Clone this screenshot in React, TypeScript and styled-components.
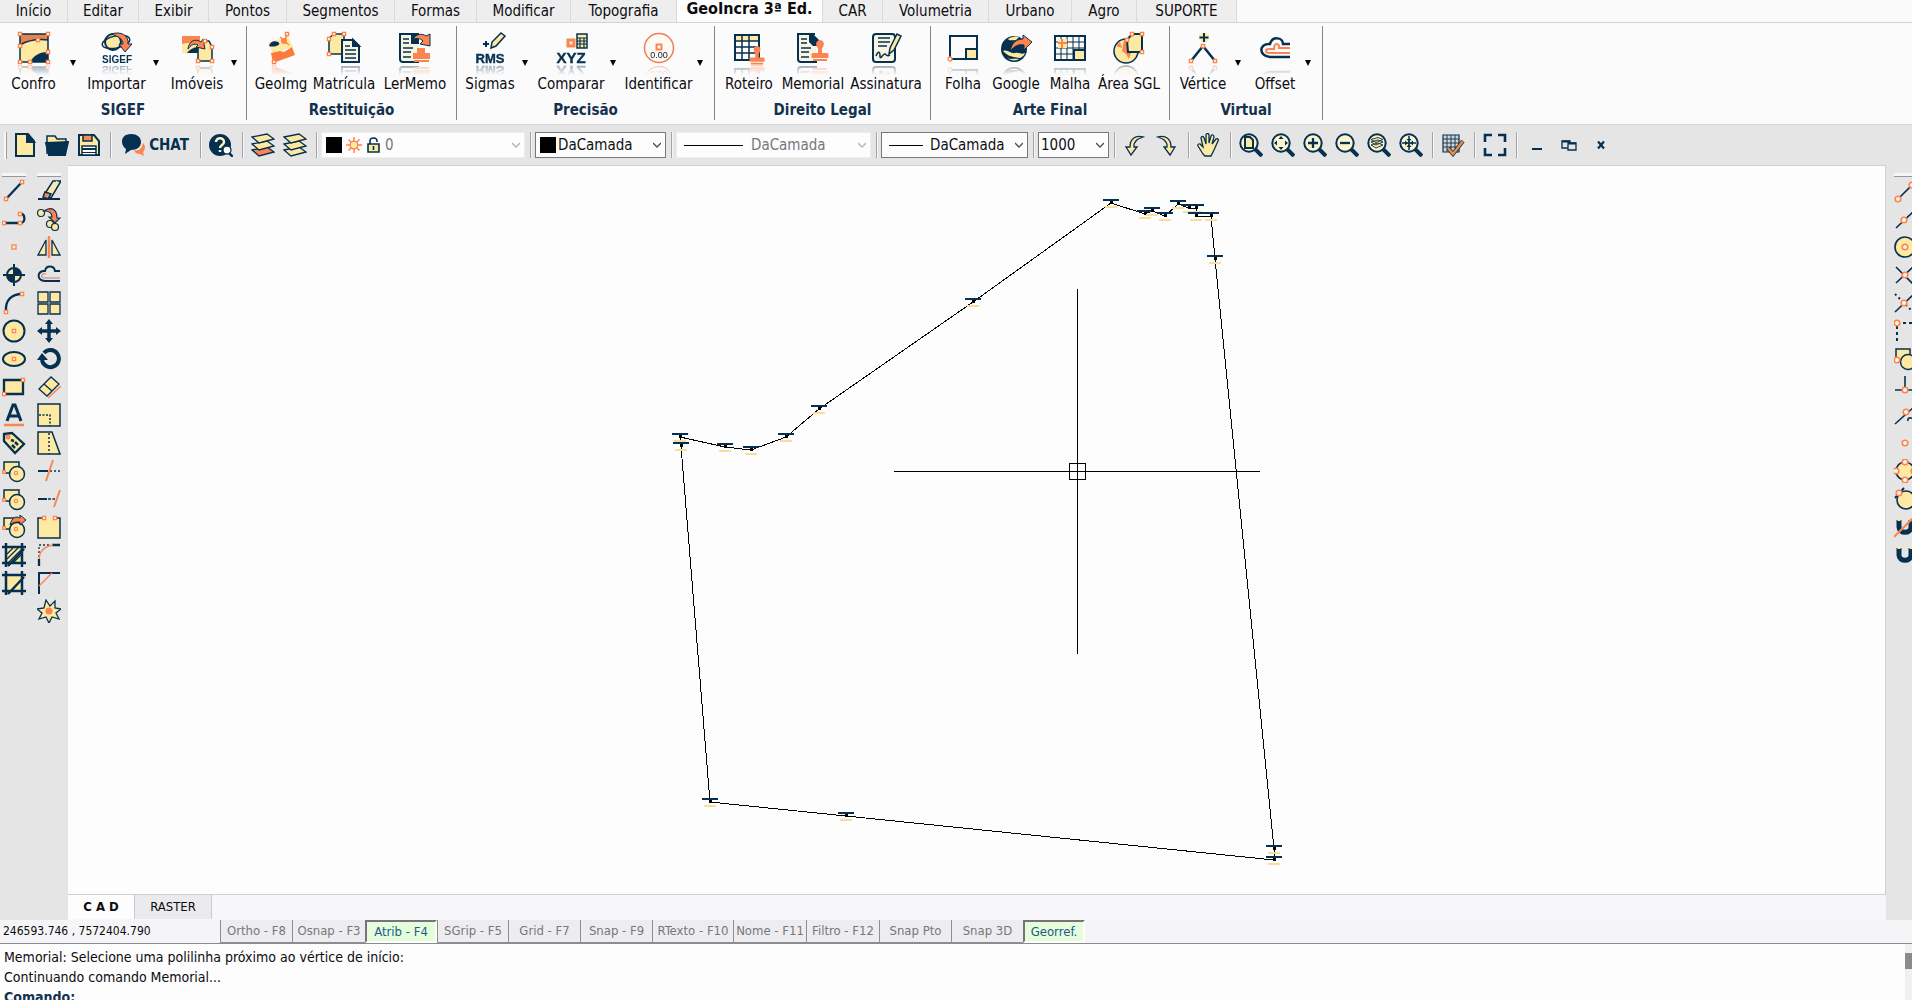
import React from "react";
import styled, { createGlobalStyle, css } from "styled-components";

const N = "#06304f";
const O = "#fb8550";
const Y = "#fde9a2";

const GlobalStyle = createGlobalStyle`
  * { box-sizing: border-box; }
  body { margin: 0; overflow: hidden; background: #fdfdfd; }
  button, select, input { font: inherit; color: inherit; }
  button { border: 0; padding: 0; background: none; cursor: default; white-space: nowrap; }
`;

const Shell = styled.div`
  display: flex;
  flex-direction: column;
  height: 100vh;
  font-family: "DejaVu Sans Condensed", "Noto Sans", sans-serif;
  font-size: 15px;
  line-height: 20px;
  color: #0c0c10;
`;

/* ---------- menu tabs ---------- */
const MenuTabs = styled.nav`
  display: flex;
  flex: 0 0 23px;
  background: #fafafb;
  border-bottom: 1px solid #d4d4d6;
`;
const MenuTab = styled.button<{ $w: number; $active?: boolean }>`
  flex: 0 0 ${(p) => p.$w}px;
  height: 22px;
  line-height: 18px;
  background: #eeeeef;
  border-right: 1px solid #dadadc;
  ${(p) =>
    p.$active &&
    css`
      background: #fdfdfd;
      font-size: 16px;
      font-weight: bold;
      padding-bottom: 4px;
    `}
`;

/* ---------- ribbon ---------- */
const Ribbon = styled.div`
  display: flex;
  flex: 0 0 101px;
  padding: 3px 0 4px;
  background: #fbfbfc;
`;
const Group = styled.section<{ $w: number }>`
  display: flex;
  flex-direction: column;
  flex: 0 0 ${(p) => p.$w}px;
  border-right: 1px solid #85858a;
`;
const GroupTools = styled.div<{ $cols: string; $pad: number }>`
  display: grid;
  grid-template-columns: ${(p) => p.$cols};
  padding-left: ${(p) => p.$pad}px;
  flex: 0 0 74px;
`;
const GroupTitle = styled.h2`
  margin: 0;
  text-align: center;
  font-size: 15px;
  line-height: 20px;
  color: #14324e;
`;
const RibbonTool = styled.button`
  display: flex;
  flex-direction: column;
  align-items: center;
  padding-top: 6px;
  min-width: 0;
  line-height: 20px;
`;
const RibbonIcon = styled.span`
  height: 42px;
  svg {
    display: block;
    overflow: visible;
    -webkit-box-reflect: below 1px linear-gradient(transparent 68%, rgba(0, 0, 0, 0.4));
  }
`;
const CaretButton = styled.button`
  display: flex;
  align-items: flex-start;
  padding: 34px 0 0 3px;
`;
const CaretShape = styled.span`
  border: 3px solid transparent;
  border-top: 6px solid #050508;
  border-bottom: 0;
`;

/* ---------- tool bar ---------- */
const ToolBar = styled.div`
  display: flex;
  align-items: center;
  flex: 0 0 41px;
  background: #e5e5e6;
  border-top: 1px solid #d2d2d4;
`;
const Grip = styled.span`
  flex: 0 0 3px;
  height: 27px;
  margin: 0 2px 0 4px;
  border: solid #9c9ca0;
  border-width: 0 1px 0 0;
  background: #f8f8fa;
`;
const Tool = styled.button<{ $w?: number }>`
  display: flex;
  align-items: center;
  justify-content: center;
  gap: 4px;
  flex: 0 0 ${(p) => p.$w ?? 32}px;
  height: 32px;
  font-weight: bold;
  color: ${N};
`;
const Sep = styled.span`
  flex: 0 0 10px;
  height: 26px;
  display: flex;
  justify-content: center;
  &::before { content: ""; width: 1px; background: #a4a4a8; box-shadow: 1px 0 #f6f6f8; }
`;
const Combo = styled.label<{ $w: number; $pad: number; $off?: boolean }>`
  display: grid;
  align-items: center;
  flex: 0 0 ${(p) => p.$w}px;
  height: 26px;
  background: #fdfdfd;
  border: 1px solid ${(p) => (p.$off ? "#ededee" : "#77777c")};
  color: ${(p) => (p.$off ? "#77777c" : "#101014")};
  & > * { grid-area: 1 / 1; }
  select {
    appearance: none;
    width: 100%;
    height: 24px;
    border: 0;
    background: none;
    opacity: 1;
    padding: 0 0 0 ${(p) => p.$pad}px;
  }
`;
const ComboArt = styled.span`
  display: flex;
  align-items: center;
  gap: 4px;
  padding-left: 4px;
`;
const Chevron = styled.svg`
  justify-self: end;
  margin-right: 4px;
  pointer-events: none;
`;
const Swatch = styled.span`
  width: 16px;
  height: 16px;
  background: #000;
`;
const Stroke = styled.span<{ $w: number }>`
  width: ${(p) => p.$w}px;
  height: 1px;
  margin-left: 3px;
  background: #000;
`;

/* ---------- work area ---------- */
const Work = styled.div`
  display: flex;
  flex: 1 1 auto;
  min-height: 0;
`;
const Palette = styled.aside<{ $w: number; $side: "left" | "right" }>`
  display: flex;
  flex: 0 0 ${(p) => p.$w}px;
  background: #e5e5e6;
  overflow: hidden;
  padding-left: ${(p) => (p.$side === "right" ? 8 : 2)}px;
  gap: 11px;
`;
const PaletteColumn = styled.div`
  display: flex;
  flex-direction: column;
  flex: 0 0 24px;
  padding-top: 8px;
  &::before { content: ""; height: 3px; border-bottom: 1px solid #98989c; background: #f6f6f8; }
`;
const PaletteTool = styled.button`
  height: 28px;
  svg { display: block; }
`;
const Centre = styled.main`
  display: flex;
  flex-direction: column;
  flex: 1 1 auto;
  min-width: 0;
`;
const Canvas = styled.div`
  flex: 1 1 0;
  min-height: 0;
  background: #fdfdfd;
  border: 1px solid #d0d0d4;
  border-width: 1px 1px 1px 0;
  svg { display: block; width: 100%; height: 100%; }
`;
const SheetTabs = styled.div`
  display: flex;
  flex: 0 0 25px;
  background: #f7f7f9;
  padding-bottom: 1px;
`;
const SheetTab = styled.button<{ $w: number; $active?: boolean }>`
  flex: 0 0 ${(p) => p.$w}px;
  font-size: 13px;
  background: ${(p) => (p.$active ? "#fdfdfd" : "#ebebed")};
  font-weight: ${(p) => (p.$active ? "bold" : "normal")};
  border-right: 1px solid #c9c9cf;
`;

/* ---------- status ---------- */
const StatusBar = styled.footer`
  display: flex;
  flex: 0 0 24px;
  background: #f5f5f7;
  border-bottom: 1px solid #8a8a90;
  font-size: 13px;
  line-height: 18px;
`;
const Coordinates = styled.output`
  flex: 0 0 220px;
  padding: 2px 0 0 3px;
  font-size: 12px;
`;
const Toggle = styled.button<{ $w: number; $on?: boolean }>`
  flex: 0 0 ${(p) => p.$w}px;
  border-left: 1px solid #8e8e93;
  border-bottom: 1px solid #8e8e93;
  background: #ededf0;
  color: #77777c;
  ${(p) =>
    p.$on &&
    css`
      background: #e6fddc;
      color: #1a5c8c;
      border: 2px solid #74747a;
      border-right-color: #fdfdfd;
      border-bottom-color: #fdfdfd;
    `}
`;

const CommandArea = styled.section`
  display: flex;
  flex: 0 0 56px;
  overflow: hidden;
  background: #fdfdfd;
`;
const CommandLog = styled.div`
  flex: 1 1 auto;
  padding: 3px 0 0 4px;
  font-size: 14px;
  p { margin: 0; }
`;
const CommandLine = styled.label`
  display: flex;
  font-weight: bold;
  color: #14324e;
  input { flex: 1; height: 20px; border: 0; padding: 0 4px; background: none; outline: 0; }
`;
const ScrollTrack = styled.div`
  flex: 0 0 7px;
  padding-top: 9px;
  background: #f0f0f3;
  &::before { content: ""; display: block; height: 16px; background: #8a8a8f; }
`;

/* ---------- icon helpers ---------- */
const Ico = ({ s = 24, children }: { s?: number; children: React.ReactNode }) => (
  <svg width={s} height={s} viewBox={`0 0 ${s} ${s}`} fill="none" stroke={N} strokeWidth={2} aria-hidden="true">
    {children}
  </svg>
);
const Node = ({ x, y, r = 1.6 }: { x: number; y: number; r?: number }) => (
  <rect x={x - r} y={y - r} width={r * 2} height={r * 2} fill="#fff3dc" stroke={O} strokeWidth={1.3} />
);
const Ring = ({ x, y }: { x: number; y: number }) => (
  <circle cx={x} cy={y} r={2.8} fill="#fff6ea" stroke={O} strokeWidth={1.6} />
);
const Stamp = ({ x, y }: { x: number; y: number }) => (
  <path
    transform={`translate(${x} ${y})`}
    fill={O}
    stroke="none"
    d="M8 0a4 4 0 0 1 3.600 5.500L10 9v4h5a1.500 1.500 0 0 1 1.500 1.500V18h-17v-3.500A1.500 1.500 0 0 1 1 13h5V9L4.400 5.500A4 4 0 0 1 8 0zM1 19h14v2H1z"
  />
);
const Page = ({ x = 0, y = 0 }: { x?: number; y?: number }) => (
  <g transform={`translate(${x} ${y})`}>
    <path fill="#f7f4e2" d="M1 1h11l6 6v16H1z" />
    <path fill={N} d="M12 1v6h6z" />
    <path strokeWidth={1.500} d="M4 7h5M4 11h11M4 15h11M4 19h11" />
  </g>
);

const ribbonIcons: Record<string, React.ReactNode> = {
  Confro: (
    <>
      <path fill={Y} stroke="none" d="M2 2h28v28H2z" />
      <path fill="#e8824f" stroke="none" d="M2 2h28v6Q14 6 2 13z" />
      <path fill={N} stroke="none" d="M12 30c4-7 10-10 18-10v10z" />
      <path d="M2 30V2h28v28z M2 13Q14 6 30 8" strokeWidth={1.500} />
      <Node x={2} y={2} /><Node x={30} y={2} /><Node x={2} y={14} /><Node x={30} y={20} /><Node x={2} y={30} /><Node x={12} y={30} /><Node x={30} y={30} /><Node x={20} y={8} />
    </>
  ),
  Importar: (
    <>
      <circle cx={12} cy={10} r={8} fill={Y} />
      <ellipse cx={15} cy={10} rx={14} ry={6} strokeWidth={1.500} transform="rotate(-12 15 10)" />
      <path fill={O} strokeWidth={1} d="M10 2c10-3 18 1 17 10h4l-7 8-6-8h4c0-5-5-8-12-10z" />
      <text x={16} y={31} textAnchor="middle" fill={N} stroke="none" fontSize={10} fontWeight="bold" fontFamily="Liberation Sans">SIGEF</text>
    </>
  ),
  "Imóveis": (
    <>
      <path fill={O} stroke="none" d="M1 4h18v6L1 12z" />
      <path fill={Y} stroke="none" d="M1 12l18-3v12H1z" />
      <path fill={N} stroke="none" d="M6 21c4-5 8-6 13-6v6z" />
      <path fill={Y} strokeWidth={1.500} d="M17 15l6-6h5l3 6v14H17z" />
      <path fill={O} strokeWidth={1} d="M7 17C8 9 14 6 20 10l2-3 2 10-9-2 2-2c-4-2-7 0-10 4z" />
      <Node x={24} y={9} /><Node x={31} y={15} /><Node x={31} y={29} /><Node x={17} y={29} />
    </>
  ),
  GeoImg: (
    <>
      <path fill={Y} stroke="none" d="M3 11l20-7 5 11-20 6z" />
      <path fill={N} stroke="none" d="M4 14c1-4 5-6 9-4s-2 6-9 4z" />
      <path fill="#fb7a3c" stroke="none" d="M6 21l9-2 4 1 8-5 3 8-22 8z" />
      <path stroke={O} strokeWidth={1.500} d="M20 9l2-7M15 5l9 8M9 26v4" />
      <circle cx={19} cy={9} r={3} fill={O} stroke="none" />
      <Node x={22} y={2} /><Node x={9} y={30} />
    </>
  ),
  "Matrícula": (
    <>
      <path fill={Y} d="M1 22V6l5-4h10v20z" strokeWidth={1.500} />
      <Node x={6} y={2} /><Node x={16} y={2} /><Node x={1} y={7} /><Node x={1} y={22} />
      <Page x={13} y={7} />
    </>
  ),
  LerMemo: (
    <>
      <path fill="#f7f4e2" d="M20 30H4a3 3 0 0 1-3-3V2h19" />
      <path fill={N} stroke="none" d="M12 2h8v10h-8z" />
      <path strokeWidth={1.500} d="M4 7h6M4 11h6M4 16h10M4 20h8M4 25h8" />
      <path fill={O} stroke="none" d="M18 16h8v5h5v6H14v-6h4zM15 28h15v2H15z" />
      <path fill={O} strokeWidth={1} d="M14 7C17 2 23 1 27 4l4-2v12l-10-2 3-3c-3-3-6-3-10-2z" />
    </>
  ),
  Sigmas: (
    <>
      <path fill={Y} strokeWidth={1.500} d="M17 16l1-6 9-9 4 3-9 10z" />
      <path d="M12 9v6M9 12h6" strokeWidth={2} />
      <text x={16} y={31} textAnchor="middle" fill={N} stroke={N} strokeWidth={0.400} fontSize={13} fontWeight="bold" fontFamily="Liberation Sans">RMS</text>
    </>
  ),
  Comparar: (
    <>
      <rect x={13} y={8} width={6} height={6} fill="#fff3dc" stroke={O} strokeWidth={3} />
      <rect x={22} y={2} width={10} height={14} fill={Y} strokeWidth={1.500} />
      <path strokeWidth={1.200} d="M22 6h10M22 9h10M22 12h10M25 6v10M29 6v10" />
      <text x={16} y={31} textAnchor="middle" fill={N} stroke={N} strokeWidth={0.400} fontSize={15} fontWeight="bold" fontFamily="Liberation Sans">XYZ</text>
    </>
  ),
  Identificar: (
    <>
      <circle cx={16} cy={16} r={14.500} stroke="#ee8058" strokeWidth={1.500} fill="#fdfaf4" />
      <rect x={13.500} y={12.500} width={5} height={5} stroke={O} fill="#fff" />
      <text x={16} y={26} textAnchor="middle" fill="#0c1c2c" stroke="none" fontSize={9} fontFamily="Liberation Sans">0.00</text>
    </>
  ),
  Roteiro: (
    <>
      <path fill={Y} stroke="none" d="M2 3h24v6H2z" />
      <path strokeWidth={2} d="M2 3h24v25H2z" />
      <path strokeWidth={1.500} d="M2 9h24M2 15h24M2 21h24M9 3v25M16 3v25" />
      <g transform="translate(17 14) scale(0.880)"><Stamp x={0} y={0} /></g>
    </>
  ),
  Memorial: (
    <>
      <path fill="#f7f4e2" d="M20 30H4a3 3 0 0 1-3-3V2h17" />
      <path fill={N} stroke="none" d="M12 2h4l6 6v6h-6l-4-4z" />
      <path strokeWidth={1.500} d="M4 7h6M4 11h6M4 16h10M4 20h8M4 25h8" />
      <Stamp x={15} y={8} />
    </>
  ),
  Assinatura: (
    <>
      <rect x={3} y={2} width={22} height={28} rx={3} fill="#f7f4e2" />
      <path strokeWidth={1.500} d="M8 6h12M8 10h12M8 14h9M6 24c2-5 4-5 4 0s3-3 5-2 2 3 5 1" />
      <path fill={Y} strokeWidth={1.500} d="M19 22l1-6 7-14 4 2-7 14z" />
    </>
  ),
  Folha: (
    <>
      <path strokeWidth={2} d="M3 27V4h27v23z" />
      <rect x={19} y={17} width={11} height={10} fill={Y} />
      <circle cx={3} cy={27} r={2} fill="#fff" stroke={O} strokeWidth={1.300} />
    </>
  ),
  Google: (
    <>
      <circle cx={14} cy={17} r={13} fill={N} stroke="none" />
      <path fill={Y} stroke="none" d="M8 7c3-2 7-3 11-2l-3 3c-4 0-7 1-8-1zM3 19c5-2 7 3 12 2s6 2 10 0c-1 3-3 4-5 5-5-1-12-1-17-7zM7 26c4 2 8 0 12 1-3 2-8 2-12-1z" />
      <path fill={O} strokeWidth={1} d="M10 19c2-9 7-12 13-12V3l9 7-8 8v-5c-6-1-9 1-14 6z" />
    </>
  ),
  Malha: (
    <>
      <path strokeWidth={2} fill="#fafaf6" d="M1 4h30v24H1z" />
      <path strokeWidth={1} d="M1 10h30M1 16h30M1 22h30M7 4v24M13 4v24M19 4v24M25 4v24" />
      <path fill={Y} stroke="none" d="M4 7h9v9H4z" />
      <path stroke={O} d="M8 7v9M4 11h9" />
      <rect x={20} y={18} width={11} height={10} fill={Y} />
    </>
  ),
  "Área SGL": (
    <>
      <circle cx={13} cy={19} r={12} fill={Y} strokeWidth={1.500} />
      <path fill={O} stroke="none" d="M11 8l6 1 2 9-3 9-3-5-4-3zM3 14l4-4 2 6z" />
      <path fill={Y} strokeWidth={2} d="M14 8l5-6h10v18H15z" />
      <Node x={19} y={2} /><Node x={29} y={2} /><Node x={14} y={8} /><Node x={29} y={20} />
    </>
  ),
  "Vértice": (
    <>
      <path strokeWidth={2.500} d="M4 29l12-15 12 15" />
      <path stroke={Y} strokeWidth={6} d="M17 1v9M12 5.500h10" />
      <path d="M17 1v9M12.500 5.500h9" strokeWidth={2} />
      <Node x={16} y={14} /><Node x={4} y={29} /><Node x={28} y={29} />
    </>
  ),
  Offset: (
    <>
      <path strokeWidth={2.500} d="M31 12h-7c0-7-11-8-13 0-11-1-12 12 0 13h20" />
      <path stroke={O} strokeWidth={2} d="M31 16H20c1-5-5-6-5 1h-5c-4 0-4 4 0 4h21" />
    </>
  ),
};

type Item = { label: string; caret?: boolean };
const groups: { title: string; w: number; pad: number; cols: string; items: Item[] }[] = [
  { title: "SIGEF", w: 247, pad: 0, cols: "67px 16px 67px 16px 62px 16px", items: [{ label: "Confro", caret: true }, { label: "Importar", caret: true }, { label: "Imóveis", caret: true }] },
  { title: "Restituição", w: 210, pad: 4, cols: "60px 66px 76px", items: [{ label: "GeoImg" }, { label: "Matrícula" }, { label: "LerMemo" }] },
  { title: "Precisão", w: 258, pad: 4, cols: "58px 16px 72px 16px 71px 16px", items: [{ label: "Sigmas", caret: true }, { label: "Comparar", caret: true }, { label: "Identificar", caret: true }] },
  { title: "Direito Legal", w: 216, pad: 4, cols: "60px 68px 78px", items: [{ label: "Roteiro" }, { label: "Memorial" }, { label: "Assinatura" }] },
  { title: "Arte Final", w: 239, pad: 4, cols: "56px 50px 58px 60px", items: [{ label: "Folha" }, { label: "Google" }, { label: "Malha" }, { label: "Área SGL" }] },
  { title: "Virtual", w: 153, pad: 4, cols: "58px 16px 54px 16px", items: [{ label: "Vértice", caret: true }, { label: "Offset", caret: true }] },
];

const menu: [string, number][] = [
  ["Início", 68], ["Editar", 71], ["Exibir", 70], ["Pontos", 78], ["Segmentos", 108], ["Formas", 82], ["Modificar", 94],
  ["Topografia", 106], ["GeoIncra 3ª Ed.", 146], ["CAR", 60], ["Volumetria", 106], ["Urbano", 83], ["Agro", 65], ["SUPORTE", 100],
];

/* ---------- palette icons ---------- */
const rectCircle = (
  <>
    <path fill={Y} strokeWidth={1.500} d="M2 3h15v11H2z" />
    <circle cx={15} cy={15} r={7.500} fill={Y} strokeWidth={1.500} />
    <circle cx={14} cy={14} r={1.600} stroke={O} fill="#fff3dc" strokeWidth={1.200} />
    <Node x={2} y={13} r={1.300} />
  </>
);
const hatchFrame = (
  <>
    <path fill={Y} stroke="none" d="M4 4h16v16H4z" />
    <path strokeWidth={2.500} d="M4 0v24M20 0v24M0 4h24M0 20h24M22 6L6 23" />
  </>
);

const drawTools: [string, React.ReactNode][] = [
  ["Linha", <><path strokeWidth={2.300} d="M4 20L20 3" /><Node x={4} y={20} /><Node x={20} y={3} /></>],
  ["Polilinha", <><path strokeWidth={2.300} d="M2 16h17c5-1 4-9 0-9" /><Node x={2} y={16} /><Node x={18} y={16} /><Node x={18} y={7} /></>],
  ["Ponto", <Node x={12} y={12} r={2} />],
  ["Alvo", <><circle cx={12} cy={12} r={7} fill={Y} /><path fill={N} stroke="none" d="M12 5a7 7 0 0 1 7 7h-7v7a7 7 0 0 1-7-7h7z" /><path d="M12 1v22M1 12h22" /></>],
  ["Arco", <><path strokeWidth={2.300} d="M4 20C3 9 10 3 20 3" /><Node x={4} y={21} /><Node x={20} y={3} /></>],
  ["Círculo", <><circle cx={12} cy={12} r={10.500} fill={Y} /><Node x={12} y={12} /></>],
  ["Elipse", <><ellipse cx={12} cy={12} rx={11} ry={7} fill={Y} /><Node x={12} y={12} /></>],
  ["Retângulo", <><path fill={Y} strokeWidth={2.300} d="M2 5h19v14H2z" /><Node x={21} y={5} /><Node x={2} y={19} /></>],
  ["Texto", <><path strokeWidth={3} d="M5 18L11 2h2l6 16M8 13h8" /><path stroke={O} strokeWidth={2.500} d="M2 22h20" /></>],
  ["Etiqueta", <><path fill={Y} strokeWidth={2.300} d="M2 3l8-1 12 11-9 9L2 10z" /><path d="M9 9l3 1M13 11l3 3M10 14l3 3" strokeWidth={2.500} /><circle cx={6} cy={6} r={1.500} stroke={O} /></>],
  ["Região", rectCircle],
  ["Bloco", rectCircle],
  ["Inserir", <>{rectCircle}<path fill={O} strokeWidth={1} d="M8 10C10 2 14 1 18 3V0l6 5-6 5V7c-4 0-7 0-10 3z" /></>],
  ["Hachura", <>{hatchFrame}<path strokeWidth={1.300} d="M5 11l6-6M5 16L16 5M6 20L20 6M11 20l9-9" /></>],
  ["Recorte", hatchFrame],
];
const editTools: [string, React.ReactNode][] = [
  ["Apagar", <><path fill={Y} strokeWidth={1.500} d="M7 16L16 2h8L14 19z" /><path stroke="#e5e5e6" strokeWidth={1.300} d="M12 14l8-12" /><path fill="#f08c58" strokeWidth={1.500} d="M8 13l6 2-3 5-5-2z" /><path d="M1 20h22" /></>],
  ["Copiar", <><circle cx={4} cy={6} r={3.500} fill={Y} strokeWidth={1.200} /><circle cx={13} cy={17} r={3.500} fill={Y} strokeWidth={1.200} /><circle cx={18} cy={20} r={3.500} fill={Y} strokeWidth={1.200} /><path fill={O} strokeWidth={1.200} d="M7 4c7-5 13-2 13 7h3l-5 5-6-6h3c0-4-3-6-8-6z" /></>],
  ["Espelhar", <><path fill={Y} strokeWidth={1.300} d="M9 5v15H1zM15 5v15h8z" /><path stroke={O} strokeWidth={2.500} d="M12 1v22" /></>],
  ["Offset", <><path d="M23 8h-5c-1-6-9-6-10 0C0 7-1 18 8 18h15" /><path stroke="#dc9a98" d="M23 15H8c-5 0-4-5 1-4" strokeWidth={1.500} /></>],
  ["Matriz", <path fill={Y} strokeWidth={1.300} d="M1 1h10v10H1zM13 1h10v10H13zM1 13h10v10H1zM13 13h10v10H13z" />],
  ["Mover", <><path strokeWidth={3.500} d="M12 4v16M4 12h16" /><path fill={N} stroke="none" d="M12 0l4 5H8zM12 24l4-5H8zM0 12l5-4v8zM24 12l-5-4v8z" /></>],
  ["Girar", <><path strokeWidth={4} d="M7 6a8.500 8.500 0 1 1-2 7" /><path fill={N} stroke="none" d="M0 13l5-7 6 7z" /></>],
  ["Alinhar", <><path fill={Y} strokeWidth={1.300} d="M2 14L14 2l8 7L10 21zM7 9l8 7" /><path stroke={O} strokeWidth={1.500} d="M11 23L24 11" /></>],
  ["Escala", <><path fill={Y} strokeWidth={1.500} d="M1 1h22v22H1z" /><path strokeWidth={1.500} strokeDasharray="2 1.500" d="M2 12h11v11" /></>],
  ["Esticar", <><path fill={Y} strokeWidth={1.500} d="M1 1h14l8 22H1z" /><path strokeWidth={1.500} strokeDasharray="2 2" d="M12 2v21" /></>],
  ["Aparar", <><path d="M1 12h10" /><path d="M13 12h10" strokeDasharray="2 2" strokeWidth={1.300} /><path stroke={O} d="M9 22l7-21" /></>],
  ["Estender", <><path d="M1 12h9" /><path d="M11 12h7" strokeDasharray="3 1.500" strokeWidth={1.500} /><path stroke={O} d="M17 20l6-17" /></>],
  ["Quebrar", <><path fill={Y} strokeWidth={1.500} d="M7 3H1v20h22V3h-6" /><Node x={7} y={3} /><Node x={18} y={3} /></>],
  ["Filete", <><path d="M2 23v-7M15 2h8" strokeWidth={2.300} /><path strokeDasharray="2 2" strokeWidth={1.300} d="M2 14V2h12" /><path stroke={O} strokeWidth={1.500} d="M2 16Q3 4 16 2" /></>],
  ["Chanfro", <><path strokeWidth={2} d="M2 23V2h21" /><path stroke={O} strokeWidth={1.500} d="M2 15L15 2" /></>],
  ["Explodir", <><path fill={Y} strokeWidth={1.300} d="M9 1l4 6 5-5v7l6 1-5 4 3 6-7-2-3 6-3-6-7 2 3-6-5-4 7-1z" /><circle cx={12} cy={12} r={3.500} fill={O} stroke="none" /></>],
];
const snapTools: [string, React.ReactNode][] = [
  ["Extremidade", <><path strokeWidth={1.600} d="M4 20L18 6" /><Ring x={4} y={20} /><Ring x={18} y={6} /></>],
  ["Ponto médio", <><path strokeWidth={1.600} d="M2 21L20 4" /><Ring x={10} y={13} /></>],
  ["Centro", <><circle cx={11} cy={12} r={10} fill={Y} strokeWidth={1.600} /><Ring x={11} y={12} /></>],
  ["Interseção", <><path strokeWidth={1.600} d="M2 4l17 17M2 20L19 4" /><Ring x={11} y={12} /></>],
  ["Interseção aparente", <><path strokeWidth={1.600} d="M1 21L19 4" /><path strokeDasharray="2 3" d="M1 3l17 17" /><Ring x={10} y={12} /></>],
  ["Extensão", <><path strokeDasharray="3 3" d="M3 22V4h17" /><Ring x={3} y={4} /></>],
  ["Inserção", <><path fill={Y} strokeWidth={1.500} d="M2 2h14v11H2z" /><circle cx={14} cy={15} r={7.500} fill={Y} strokeWidth={1.500} /><Ring x={3} y={13} /></>],
  ["Perpendicular", <><path strokeWidth={1.600} d="M11 1v14M1 15h20" /><Ring x={11} y={15} /></>],
  ["Próximo", <><path strokeWidth={1.600} d="M1 21L20 4M14 18q-1-5 6-2" /><Ring x={12} y={9} /></>],
  ["Nó", <Ring x={11} y={12} />],
  ["Quadrante", <><circle cx={11} cy={12} r={9} fill={Y} strokeWidth={1.600} /><Ring x={11} y={3} /><Ring x={2} y={12} /><Ring x={20} y={12} /><Ring x={11} y={21} /></>],
  ["Tangente", <><circle cx={12} cy={13} r={9} fill={Y} strokeWidth={1.600} /><path d="M1 11L10 1" /><Ring x={5} y={6} /></>],
  ["Desligar ímã", <><path strokeWidth={5} d="M5 5v7c0 7 12 7 12 0V5" /><path stroke={Y} strokeWidth={3} d="M5 3v3M17 3v3" /><path stroke={O} strokeWidth={2} d="M0 22L20 2" /></>],
  ["Ímã", <><path strokeWidth={5} d="M5 5v7c0 7 12 7 12 0V5" /><path stroke={Y} strokeWidth={3} d="M5 3v3M17 3v3" /></>],
];

const Column = ({ tools }: { tools: [string, React.ReactNode][] }) => (
  <PaletteColumn>
    {tools.map(([name, art]) => (
      <PaletteTool key={name} aria-label={name}>
        <Ico>{art}</Ico>
      </PaletteTool>
    ))}
  </PaletteColumn>
);

/* ---------- tool bar icons ---------- */
const Zoom = ({ children, name }: { children: React.ReactNode; name: string }) => (
  <Tool aria-label={name}>
    <Ico>
      <path strokeWidth={4} d="M16 16l7 7" />
      <circle cx={10} cy={10} r={8.700} fill="#fbf4cf" strokeWidth={2} />
      {children}
    </Ico>
  </Tool>
);
const Layers = ({ name, accent }: { name: string; accent?: boolean }) => (
  <Tool aria-label={name}>
    <Ico>
      <g strokeWidth={1.300}>
        <path fill={accent ? O : Y} d="M1 17l15-3 7 5-15 4z" />
        <path fill={Y} d="M1 11l15-3 7 5-15 4z" />
        <path fill={Y} d="M1 4l15-3 7 5-15 4z" />
      </g>
    </Ico>
  </Tool>
);
const Chev = ({ off }: { off?: boolean }) => (
  <Chevron width={8} height={6} viewBox="0 0 8 6" fill="none" stroke={off ? "#b4b4b9" : "#505056"} strokeWidth={1.300}>
    <path d="M0 1l4 4 4-4" />
  </Chevron>
);

/* ---------- drawing ---------- */
const vertices: [number, number][] = [
  [680, 437], [725, 447], [751, 450], [786, 437], [819, 409], [973, 302], [1111, 203], [1145, 214], [1152, 211], [1165, 216],
  [1178, 204], [1189, 208], [1196, 208], [1196, 216], [1211, 216], [1215, 259], [1274, 849], [1274, 860], [846, 816], [710, 802], [681, 446],
];

const Drawing = () => (
  <svg viewBox="68 166 1817 728" role="img" aria-label="Poligonal">
    <polygon points={vertices.map((v) => v.join(",")).join(" ")} fill="none" stroke="#000" strokeWidth={1} shapeRendering="crispEdges" />
    {vertices.map(([x, y]) => (
      <g key={`${x}-${y}`} shapeRendering="crispEdges">
        <rect x={x - 6} y={y + 3} width={12} height={2} fill="#f9dd9c" />
        <rect x={x - 8} y={y - 4} width={16} height={2} fill={N} />
        <rect x={x - 1} y={y - 2} width={3} height={3} fill="#000" />
      </g>
    ))}
    <g fill="none" stroke="#000" shapeRendering="crispEdges">
      <path d="M894 471.500h366M1077.500 289v365" />
      <rect x={1069.500} y={463.500} width={16} height={16} />
    </g>
  </svg>
);

const toggles: [string, number, boolean?][] = [
  ["Ortho - F8", 72], ["Osnap - F3", 73], ["Atrib - F4", 72, true], ["SGrip - F5", 71], ["Grid - F7", 72], ["Snap - F9", 72], ["RTexto - F10", 81],
  ["Nome - F11", 73], ["Filtro - F12", 73], ["Snap Pto", 72], ["Snap 3D", 72], ["Georref.", 62, true],
];

export default function App() {
  return (
    <Shell>
      <GlobalStyle />
      <MenuTabs>
        {menu.map(([label, w]) => (
          <MenuTab key={label} $w={w} $active={label.startsWith("Geo")}>{label}</MenuTab>
        ))}
      </MenuTabs>

      <Ribbon>
        {groups.map((g) => (
          <Group key={g.title} $w={g.w}>
            <GroupTools $cols={g.cols} $pad={g.pad}>
              {g.items.map((it) => (
                <React.Fragment key={it.label}>
                  <RibbonTool>
                    <RibbonIcon><Ico s={32}>{ribbonIcons[it.label]}</Ico></RibbonIcon>
                    {it.label}
                  </RibbonTool>
                  {it.caret && <CaretButton aria-label={`Mais opções de ${it.label}`}><CaretShape /></CaretButton>}
                </React.Fragment>
              ))}
            </GroupTools>
            <GroupTitle>{g.title}</GroupTitle>
          </Group>
        ))}
      </Ribbon>

      <ToolBar>
        <Grip />
        <Tool aria-label="Novo"><Ico><path fill={Y} d="M3 1h12l6 7v15H3z" /><path fill={N} d="M14 1v8h7z" /></Ico></Tool>
        <Tool aria-label="Abrir"><Ico><path fill={Y} strokeWidth={1.500} d="M2 21V3h8l2 3h9v5" /><path fill={N} d="M1 10l22-1-3 13H4z" /></Ico></Tool>
        <Tool aria-label="Salvar"><Ico><path fill={Y} d="M2 2h15l5 6v14H2z" /><path fill="#f08c58" strokeWidth={1.500} d="M6 2h9v6H6z" /><path fill="#fff" strokeWidth={1.500} d="M5 13h14v9H5z" /><path fill={N} stroke="none" d="M5 15h14v2H5zM5 19h14v1H5z" /></Ico></Tool>
        <Sep />
        <Tool $w={80}>
          <Ico>
            <path fill={O} stroke="none" d="M13 17c5 2 8-2 9-7 3 3 2 7 0 9l1 4-4-2c-3 0-5-1-6-4z" />
            <path fill={N} stroke="none" d="M10 1c6 0 10 3 10 8s-4 8-10 8l-6 4 1-5c-6-4-6-15 5-15z" />
          </Ico>
          CHAT
        </Tool>
        <Sep />
        <Tool aria-label="Ajuda">
          <Ico>
            <circle cx={11} cy={12} r={11} fill={N} stroke="none" />
            <path stroke="#fdf3c8" strokeWidth={2.500} d="M7 9c0-5 8-5 8 0 0 3-4 3-4 6M11 17v2" />
            <circle cx={18} cy={17} r={4} fill="#fff" strokeWidth={1.300} /><path strokeWidth={2.500} d="M20 20l4 4" />
          </Ico>
        </Tool>
        <Sep />
        <Layers name="Camadas" accent />
        <Layers name="Gerenciar camadas" />
        <Sep />
        <Combo $w={204} $pad={63} $off>
          <ComboArt>
            <Swatch />
            <Ico s={16}><path stroke={O} strokeWidth={1.500} d="M8 0v16M0 8h16M2.500 2.500l11 11M13.500 2.500l-11 11" /><circle cx={8} cy={8} r={3.800} fill={Y} stroke={O} strokeWidth={1.300} /></Ico>
            <Ico s={16}><path strokeWidth={1.600} d="M4 7V4c0-4 7-4 7 0v1" /><path fill={Y} strokeWidth={1.600} d="M2 7h11v8H2zM7.500 9v4" /></Ico>
          </ComboArt>
          <select disabled aria-label="Camada"><option>0</option></select>
          <Chev off />
        </Combo>
        <Sep />
        <Combo $w={131} $pad={22}>
          <ComboArt><Swatch /></ComboArt>
          <select aria-label="Cor"><option>DaCamada</option></select>
          <Chev />
        </Combo>
        <Sep />
        <Combo $w={195} $pad={74} $off>
          <ComboArt><Stroke $w={59} /></ComboArt>
          <select disabled aria-label="Tipo de linha"><option>DaCamada</option></select>
          <Chev off />
        </Combo>
        <Sep />
        <Combo $w={147} $pad={48}>
          <ComboArt><Stroke $w={34} /></ComboArt>
          <select aria-label="Espessura"><option>DaCamada</option></select>
          <Chev />
        </Combo>
        <Sep />
        <Combo $w={71} $pad={2}>
          <select aria-label="Escala"><option>1000</option></select>
          <Chev />
        </Combo>
        <Sep />
        <Tool aria-label="Desfazer"><Ico><path fill={Y} strokeWidth={1.300} d="M20 4C12 2 7 6 7 14H3l5 8 6-8h-3c-1-5 3-8 9-10z" /></Ico></Tool>
        <Tool aria-label="Refazer"><Ico><path fill={Y} strokeWidth={1.300} d="M3 4c8-2 13 2 13 10h4l-5 8-6-8h3c1-5-3-8-9-10z" /></Ico></Tool>
        <Sep />
        <Tool aria-label="Mover vista"><Ico><path fill={Y} strokeWidth={1.300} d="M6 21l-5-8c-1-2 2-3 3-1l2 2-2-9c0-2 3-2 3 0l2 6V2c0-2 3-2 3 0v8l2-7c1-2 3-1 3 1l-2 7 4-5c1-1 3 0 2 2l-4 9-3 6H8z" /></Ico></Tool>
        <Sep />
        <Zoom name="Zoom página"><path fill={Y} d="M6 4h5l3 3v8H6z" strokeWidth={2} /></Zoom>
        <Zoom name="Zoom extensão"><path fill={N} stroke="none" d="M10 3l2.500 3h-5zM10 17l2.500-3h-5zM3 10l3-2.500v5zM17 10l-3-2.500v5z" /></Zoom>
        <Zoom name="Aproximar"><path strokeWidth={2.300} d="M10 5v10M5 10h10" /></Zoom>
        <Zoom name="Afastar"><path strokeWidth={2.300} d="M5 10h10" /></Zoom>
        <Zoom name="Zoom camada"><path fill={Y} strokeWidth={0.900} d="M4 12l7-2 5 2-7 3zM4 9l7-2 5 2-7 3zM4 6.500l7-2 5 2-7 3z" /></Zoom>
        <Zoom name="Zoom centro"><path strokeWidth={1.500} d="M10 3v14M3 10h14" /><path fill={N} stroke="none" d="M10 9L7.500 6h5zM10 11l2.500 3h-5zM9 10L6 7.500v5zM11 10l3-2.500v5z" /></Zoom>
        <Sep />
        <Tool aria-label="Verificar tabela">
          <Ico><path fill="#d5d6d4" strokeWidth={1.200} d="M2 2h16v17H2z" /><path strokeWidth={0.900} d="M2 6h16M2 10h16M2 14h16M6 2v17M10 2v17M14 2v17" /><path stroke={N} strokeWidth={4} d="M7 15l5 6L22 8" /><path stroke="#f58a3c" strokeWidth={2.500} d="M7 15l5 6L22 8" /></Ico>
        </Tool>
        <Sep />
        <Tool aria-label="Tela cheia"><Ico><path strokeWidth={2.600} d="M2 9V2h7M15 2h7v7M22 15v7h-7M9 22H2v-7" /></Ico></Tool>
        <Sep />
        <Tool aria-label="Minimizar"><Ico s={16}><path strokeWidth={2} d="M3 12h10" /></Ico></Tool>
        <Tool aria-label="Restaurar"><Ico s={16}><path strokeWidth={1.300} d="M1 4h8v7H1z" /><path strokeWidth={1.300} fill="#e5e5e6" d="M7 6h8v7H7z" /><path d="M1 4.500h8M7 6.500h8" strokeWidth={1.800} /></Ico></Tool>
        <Tool aria-label="Fechar"><Ico s={16}><path strokeWidth={2.200} d="M5 4.500l6 7M11 4.500l-6 7" /></Ico></Tool>
      </ToolBar>

      <Work>
        <Palette $w={68} $side="left">
          <Column tools={drawTools} />
          <Column tools={editTools} />
        </Palette>
        <Centre>
          <Canvas><Drawing /></Canvas>
          <SheetTabs>
            <SheetTab $w={67} $active>C A D</SheetTab>
            <SheetTab $w={77}>RASTER</SheetTab>
          </SheetTabs>
        </Centre>
        <Palette $w={26} $side="right">
          <Column tools={snapTools} />
        </Palette>
      </Work>

      <StatusBar>
        <Coordinates>246593.746 , 7572404.790</Coordinates>
        {toggles.map(([label, w, on]) => (
          <Toggle key={label} $w={w} $on={on} aria-pressed={!!on}>{label}</Toggle>
        ))}
      </StatusBar>

      <CommandArea>
        <CommandLog>
          <p>Memorial: Selecione uma polilinha próximo ao vértice de início:</p>
          <p>Continuando comando Memorial...</p>
          <CommandLine>Comando:<input aria-label="Comando" /></CommandLine>
        </CommandLog>
        <ScrollTrack />
      </CommandArea>
    </Shell>
  );
}
